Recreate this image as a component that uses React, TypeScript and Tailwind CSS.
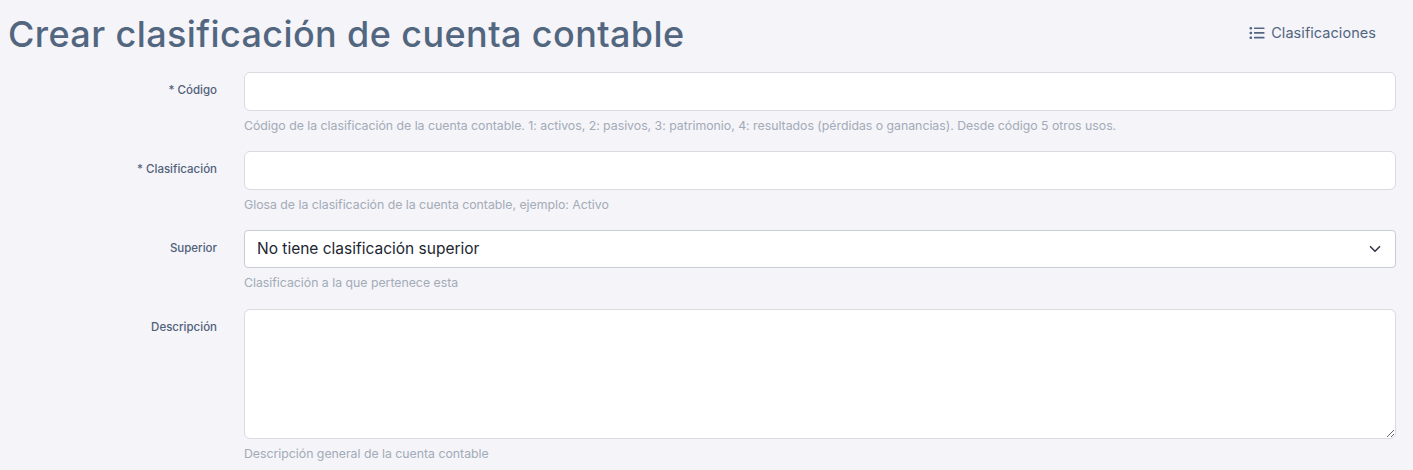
import React from "react";

const font = "font-['Inter','Noto_Sans',sans-serif]";

function Row({ label, help, children, className = "" }: { label: string; help: string; children: React.ReactNode; className?: string }) {
  return (
    <div className={`flex ${className}`}>
      <label className="w-[217px] shrink-0 pt-[11px] text-right text-[11.5px] leading-[14px] font-medium text-[#52617a]">{label}</label>
      <div className="ml-[27px] flex-1">
        {children}
        <p className="mt-[6px] text-[12.3px] leading-[18px] tracking-[-0.01px] text-[#a3abb7]">{help}</p>
      </div>
    </div>
  );
}

const inputCls = "block w-full h-[39px] rounded-[6px] border border-[#d8dbe0] bg-white px-3 outline-none";

export default function App() {
  return (
    <div className={`${font} h-[470px] w-[1413px] overflow-hidden bg-[#f4f4f9] pr-[17px]`}>
      <header className="flex h-[72px] items-start justify-between">
        <h1 className="ml-[8px] mt-[11px] text-[36px] leading-[47px] font-medium tracking-[0.4px] text-[#526680]">Crear clasificación de cuenta contable</h1>
        <a className="mt-[22px] mr-[20px] flex items-center gap-[6px] text-[14.5px] leading-[22px] tracking-[0.05px] text-[#526680]">
          <svg width="16" height="16" viewBox="0 0 16 16" fill="currentColor">
            <rect x="0.5" y="2" width="2.6" height="2.6" rx="1" />
            <rect x="0.5" y="6.7" width="2.6" height="2.6" rx="1" />
            <rect x="0.5" y="11.4" width="2.6" height="2.6" rx="1" />
            <rect x="5" y="2.4" width="10.5" height="1.7" rx="0.5" />
            <rect x="5" y="7.1" width="10.5" height="1.7" rx="0.5" />
            <rect x="5" y="11.8" width="10.5" height="1.7" rx="0.5" />
          </svg>
          Clasificaciones
        </a>
      </header>
      <Row label="* Código" help="Código de la clasificación de la cuenta contable. 1: activos, 2: pasivos, 3: patrimonio, 4: resultados (pérdidas o ganancias). Desde código 5 otros usos.">
        <input className={inputCls} />
      </Row>
      <Row label="* Clasificación" help="Glosa de la clasificación de la cuenta contable, ejemplo: Activo" className="mt-[16px]">
        <input className={inputCls} />
      </Row>
      <Row label="Superior" help="Clasificación a la que pertenece esta" className="mt-[16px]">
        <div className="relative">
          <select className="block h-[38px] w-full appearance-none rounded-[4px] border border-[#c8ccd4] bg-white pl-3 pr-8 text-[15.5px] text-[#212631] outline-none">
            <option>No tiene clasificación superior</option>
          </select>
          <svg className="pointer-events-none absolute right-[15px] top-[13px]" width="12" height="12" viewBox="0 0 16 16" fill="none" stroke="#343a4a" strokeWidth="2.2" strokeLinecap="round" strokeLinejoin="round">
            <path d="M2 5l6 6 6-6" />
          </svg>
        </div>
      </Row>
      <Row label="Descripción" help="Descripción general de la cuenta contable" className="mt-[17px]">
        <textarea className="block h-[130px] w-full rounded-[6px] border border-[#d8dbe0] bg-white px-3 py-2 outline-none" />
      </Row>
    </div>
  );
}
